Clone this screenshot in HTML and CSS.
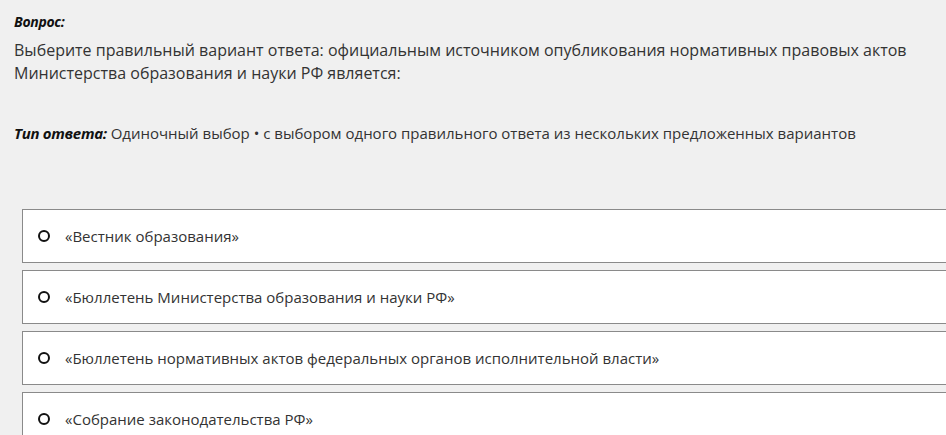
FILE: index.html
```html
<!DOCTYPE html>
<html lang="ru">
<head>
    <meta charset="UTF-8">
    <meta name="viewport" content="width=device-width, initial-scale=1.0">
    <title>Вопрос</title>
    <link rel="stylesheet" href="styles.css">
</head>
<body>
    <div class="question">
        <div class="label">Вопрос:</div>
        <div class="question-text">Выберите правильный вариант ответа: официальным источником опубликования нормативных правовых актов Министерства образования и науки РФ является:</div>

        <div class="answer-type"><span class="label">Тип ответа:</span> Одиночный выбор • с выбором одного правильного ответа из нескольких предложенных вариантов</div>
    </div>

    <div class="options">
        <div class="option"><span class="radio"></span>«Вестник образования»</div>
        <div class="option"><span class="radio"></span>«Бюллетень Министерства образования и науки РФ»</div>
        <div class="option"><span class="radio"></span>«Бюллетень нормативных актов федеральных органов исполнительной власти»</div>
        <div class="option"><span class="radio"></span>«Собрание законодательства РФ»</div>
    </div>
</body>
</html>
```

FILE: styles.css
```css
body {
    margin: 0;
    padding: 12px 0 0 14px;
    background: #f0f0f0;
    font-family: "Open Sans", sans-serif;
    color: #333;
    overflow: hidden;
}
.label {
    font-weight: bold;
    font-style: italic;
    font-size: 14px;
    line-height: 19px;
    color: #111;
    letter-spacing: -0.3px;
}
.question-text {
    width: 925px;
    font-size: 16px;
    line-height: 23px;
    margin-top: 8px;
}
.answer-type {
    margin-top: 38px;
    font-size: 15px;
    line-height: 20px;
}
.answer-type .label {
    font-size: 15px;
}
.options {
    margin: 66px 0 0 8px;
    width: 960px;
}
.option {
    display: flex;
    align-items: center;
    height: 52px;
    background: #fff;
    border: 1px solid #8a8a8a;
    margin-bottom: 7px;
    font-size: 15px;
    color: #333;
}
.radio {
    width: 8px;
    height: 8px;
    border: 2.5px solid #111;
    border-radius: 50%;
    margin: 0 15px 0 15px;
}
```
